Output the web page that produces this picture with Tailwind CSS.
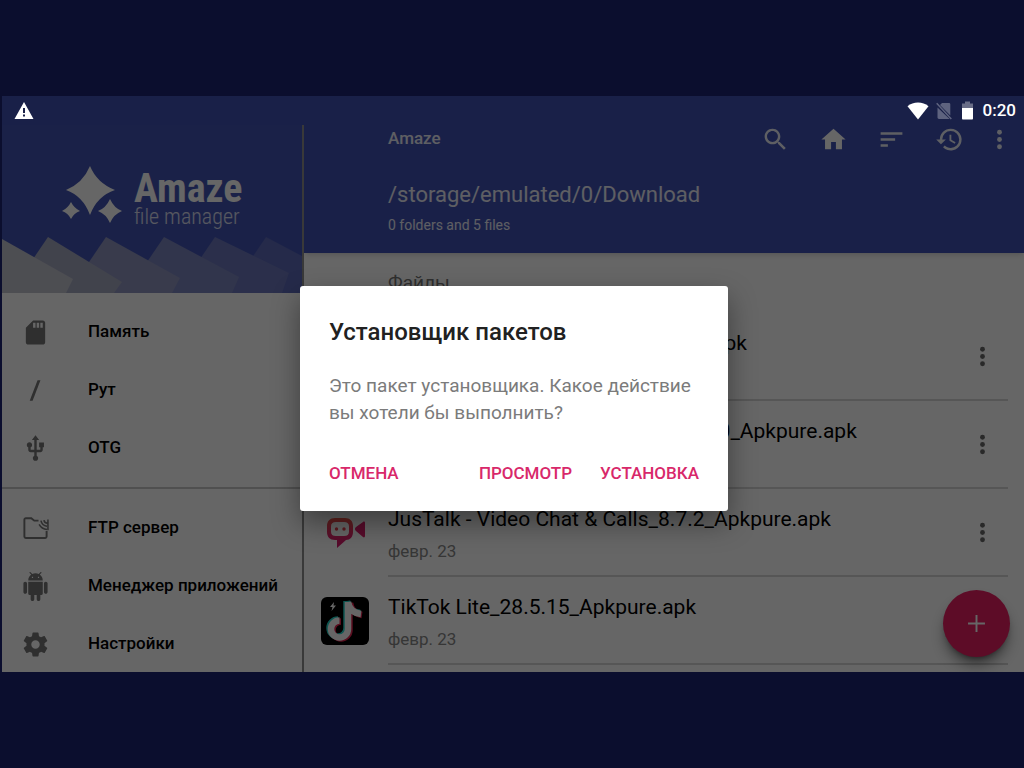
<!DOCTYPE html>
<html lang="ru">

<head>
  <meta charset="UTF-8">
  <meta name="viewport" content="width=device-width, initial-scale=1.0">
  <title>Amaze</title>
  <script src="https://cdn.jsdelivr.net/npm/@tailwindcss/browser@4"></script>
</head>

<body class="bg-[#0b0e2e] min-h-screen flex items-center font-['Roboto',sans-serif]">
  <div class="relative w-full aspect-video overflow-hidden border-l-2 border-[#0b0e2e] bg-[#3f51b5] flex flex-col">

    <!-- Barra de estado -->
    <div class="relative z-20 h-[29px] shrink-0 flex items-center justify-between pl-3 pr-2 text-white">
      <svg class="size-5" viewBox="0 0 20 20" fill="currentColor">
        <path fill-rule="evenodd" d="M10 1 19.500 18H.5zM9 7v5h2V7zm0 6.500v2h2v-2z" />
      </svg>
      <div class="flex items-center gap-[7px]">
        <svg class="w-[22px] h-[18px]" viewBox="0 0 22 18" fill="currentColor">
          <path d="M11 17.500.5 4.200C3.500 1.800 7 .6 11 .6s7.500 1.200 10.500 3.600z" />
        </svg>
        <svg class="w-4 h-[18px] text-white/30" viewBox="0 0 16 18" fill="currentColor">
          <path d="M6 1h7c.8 0 1.300.6 1.300 1.300v11.200L4 3zM1.500 5.500 13.600 17H3c-.8 0-1.500-.6-1.500-1.400z" />
          <path d="M.7 1.200 15.300 17" stroke="currentColor" stroke-width="1.500" />
        </svg>
        <svg class="w-[17px] h-[19px]" viewBox="0 0 17 19" fill="currentColor">
          <path d="M6 .5h5v2h3V7H3V2.500h3z" opacity=".35" />
          <path d="M3 7h11v10.500c0 .5-.4 1-1 1H4c-.6 0-1-.5-1-1z" />
        </svg>
        <span class="text-[17px] font-medium">0:20</span>
      </div>
    </div>

    <div class="flex flex-1 min-h-0">
      <!-- Menu lateral -->
      <nav class="w-[302px] shrink-0 bg-white border-r-2 border-[#8f8f8f] overflow-hidden">
        <div class="relative h-[168px] bg-[#4354b4]">
          <svg class="absolute inset-0 size-full" viewBox="0 0 300 168" preserveAspectRatio="none">
            <path d="M264 112 226 168H300V131z" fill="#5c69b8" />
            <path d="M213 112 175 168H280L287 148z" fill="#6c77bb" />
            <path d="M162 112 124 168H230L237 152z" fill="#7c85bd" />
            <path d="M104 112 66 168H170L178 153z" fill="#8e94bd" />
            <path d="M46 112 8 168H112L120 157z" fill="#a4a7bf" />
            <path d="M0 114V168H64L71 154z" fill="#c0c2ce" />
          </svg>
          <div class="relative flex items-center gap-3 pl-15 pt-10">
            <svg class="size-[60px]" viewBox="0 0 60 60" fill="#fff">
              <path d="M28 1Q35 18 53 25Q35 31 28 50Q21 31 4 25Q21 18 28 1z" />
              <path d="M9 37Q12 43 18 46Q12 48 9 54Q6 48 0 46Q6 43 9 37z" />
              <path d="M48 34Q52 43 60 46Q52 49 48 58Q44 49 36 46Q44 43 48 34z" />
            </svg>
            <div class="pt-1 font-['Roboto_Condensed','Roboto',sans-serif] text-white">
              <div class="text-[40px] leading-10 font-bold">Amaze</div>
              <div class="text-[22px] leading-4 font-light text-white/80">file manager</div>
            </div>
          </div>
        </div>

        <ul class="py-[10px] border-b-2 border-[#c8c8c8]">
          <li>
            <a href="#" class="h-[58px] flex items-center gap-[38px] pl-[19px] text-[17px] font-medium text-black">
              <svg class="size-[29px] text-[#757575]" viewBox="0 0 24 24" fill="currentColor"><path d="M18 2h-8L4.020 8 4 20c0 1.100.9 2 2 2h12c1.100 0 2-.9 2-2V4c0-1.100-.9-2-2-2zm-6 6h-2V4h2v4zm3 0h-2V4h2v4zm3 0h-2V4h2v4z" /></svg>
              Память
            </a>
          </li>
          <li>
            <a href="#" class="h-[58px] flex items-center gap-[38px] pl-[19px] text-[17px] font-medium text-black">
              <svg class="size-[29px] text-[#757575]" viewBox="0 0 24 24" fill="currentColor"><path d="M13.700 3.500h2.400l-6.500 17H7.200z" /></svg>
              Рут
            </a>
          </li>
          <li>
            <a href="#" class="h-[58px] flex items-center gap-[38px] pl-[19px] text-[17px] font-medium text-black">
              <svg class="size-[29px] text-[#757575]" viewBox="0 0 24 24" fill="currentColor"><path d="M15 7v4h1v2h-3V5h2l-3-4-3 4h2v8H8v-2.070c.7-.37 1.200-1.080 1.200-1.930 0-1.210-.99-2.200-2.200-2.200-1.210 0-2.200.99-2.200 2.200 0 .85.5 1.560 1.200 1.930V13c0 1.110.89 2 2 2h3v3.050c-.71.37-1.200 1.100-1.200 1.950 0 1.220.99 2.200 2.200 2.200 1.210 0 2.200-.98 2.200-2.200 0-.85-.49-1.580-1.200-1.950V15h3c1.110 0 2-.89 2-2v-2h1V7h-4z" /></svg>
              OTG
            </a>
          </li>
        </ul>

        <ul class="py-[10px]">
          <li>
            <a href="#" class="h-[58px] flex items-center gap-[38px] pl-[19px] text-[17px] font-medium text-black">
              <svg class="size-[29px] text-[#757575]" viewBox="0 0 24 24" fill="none" stroke="currentColor" stroke-width="1.600">
                <path d="M14.500 5.500H11l-2.500-2H4c-.7 0-1.200.5-1.200 1.200v14c0 .7.500 1.200 1.200 1.200h16c.7 0 1.200-.5 1.200-1.200V14" />
                <path d="M22.300 4.500v9M16.500 5.500a6 6 0 0 0 5 4.700M15 8.500a8.500 8.500 0 0 0 6.500 4.300M19 5a3 3 0 0 0 3 2.600" stroke-width="1.300" />
              </svg>
              FTP сервер
            </a>
          </li>
          <li>
            <a href="#" class="h-[58px] flex items-center gap-[38px] pl-[19px] text-[17px] font-medium text-black">
              <svg class="size-[29px] text-[#757575]" viewBox="0 0 24 24" fill="currentColor"><path d="M6 18c0 .55.45 1 1 1h1v3.500c0 .83.67 1.500 1.500 1.500s1.500-.67 1.500-1.500V19h2v3.500c0 .83.67 1.500 1.500 1.500s1.500-.67 1.500-1.500V19h1c.55 0 1-.45 1-1V8H6v10zM3.500 8C2.670 8 2 8.670 2 9.500v7c0 .83.67 1.500 1.500 1.500S5 17.330 5 16.500v-7C5 8.670 4.330 8 3.500 8zm17 0c-.83 0-1.500.67-1.500 1.500v7c0 .83.67 1.500 1.500 1.500s1.500-.67 1.500-1.500v-7c0-.83-.67-1.500-1.500-1.500zm-4.970-5.840l1.300-1.300c.2-.2.2-.51 0-.71-.2-.2-.51-.2-.71 0l-1.480 1.480C13.850 1.230 12.950 1 12 1c-.96 0-1.860.23-2.660.63L7.850.15c-.2-.2-.51-.2-.71 0-.2.2-.2.51 0 .71l1.310 1.310C6.970 3.260 6 5.010 6 7h12c0-1.990-.97-3.750-2.470-4.840zM10 5H9V4h1v1zm5 0h-1V4h1v1z" /></svg>
              Менеджер приложений
            </a>
          </li>
          <li>
            <a href="#" class="h-[58px] flex items-center gap-[38px] pl-[19px] text-[17px] font-medium text-black">
              <svg class="size-[29px] text-[#757575]" viewBox="0 0 24 24" fill="currentColor"><path d="M19.430 12.980c.04-.32.07-.64.07-.98s-.03-.66-.07-.98l2.110-1.650c.19-.15.24-.42.12-.64l-2-3.460c-.12-.22-.39-.3-.61-.22l-2.490 1c-.52-.4-1.080-.73-1.690-.98l-.38-2.650C14.460 2.180 14.250 2 14 2h-4c-.25 0-.46.18-.49.42l-.38 2.650c-.61.25-1.170.59-1.690.98l-2.490-1c-.23-.09-.49 0-.61.22l-2 3.460c-.13.22-.07.49.12.64l2.110 1.650c-.04.32-.07.65-.07.98s.03.66.07.98l-2.110 1.650c-.19.15-.24.42-.12.64l2 3.460c.12.22.39.3.61.22l2.490-1c.52.4 1.080.73 1.690.98l.38 2.650c.03.24.24.42.49.42h4c.25 0 .46-.18.49-.42l.38-2.650c.61-.25 1.170-.59 1.690-.98l2.490 1c.23.09.49 0 .61-.22l2-3.460c.12-.22.07-.49-.12-.64l-2.110-1.650zM12 15.500c-1.930 0-3.500-1.570-3.500-3.500s1.570-3.500 3.500-3.500 3.500 1.570 3.500 3.500-1.570 3.500-3.500 3.500z" /></svg>
              Настройки
            </a>
          </li>
        </ul>
      </nav>

      <!-- Contenido -->
      <main class="flex-1 min-w-0 bg-white overflow-hidden">
        <header class="relative h-32 bg-[#3f51b5] text-white/90 pl-[84px] shadow-md">
          <div class="flex items-center justify-between h-7 pr-1">
            <h1 class="text-[17px] font-medium">Amaze</h1>
            <div class="flex items-center">
              <button type="button" aria-label="Поиск" class="w-[58px] flex justify-center">
                <svg class="size-[29px]" viewBox="0 0 24 24" fill="currentColor"><path d="M15.500 14h-.79l-.28-.27C15.410 12.590 16 11.110 16 9.500 16 5.910 13.090 3 9.500 3S3 5.910 3 9.500 5.910 16 9.500 16c1.610 0 3.090-.59 4.230-1.570l.27.28v.79l5 4.990L20.490 19l-4.990-5zm-6 0C7.010 14 5 11.990 5 9.500S7.010 5 9.500 5 14 7.010 14 9.500 11.990 14 9.500 14z" /></svg>
              </button>
              <button type="button" aria-label="Домой" class="w-[58px] flex justify-center text-white">
                <svg class="size-[29px]" viewBox="0 0 24 24" fill="currentColor"><path d="M10 20v-6h4v6h5v-8h3L12 3 2 12h3v8z" /></svg>
              </button>
              <button type="button" aria-label="Сортировка" class="w-[58px] flex justify-center">
                <svg class="size-[29px]" viewBox="0 0 24 24" fill="currentColor"><path d="M3 18h6v-2H3v2zM3 6v2h18V6H3zm0 7h12v-2H3v2z" /></svg>
              </button>
              <button type="button" aria-label="История" class="w-[58px] flex justify-center">
                <svg class="size-[29px]" viewBox="0 0 24 24" fill="currentColor"><path d="M13 3a9 9 0 0 0-9 9H1l3.890 3.890.07.14L9 12H6a7 7 0 1 1 7 7c-1.930 0-3.680-.79-4.940-2.060l-1.420 1.420A9 9 0 1 0 13 3zm-1 5v5l4.280 2.540.72-1.210-3.500-2.080V8H12z" /></svg>
              </button>
              <button type="button" aria-label="Ещё" class="w-[42px] flex justify-center">
                <svg class="size-[29px]" viewBox="0 0 24 24" fill="currentColor"><circle cx="12" cy="6" r="2" /><circle cx="12" cy="12" r="2" /><circle cx="12" cy="18" r="2" /></svg>
              </button>
            </div>
          </div>
          <p class="pt-7 text-[22px] leading-7">/storage/emulated/0/Download</p>
          <p class="pt-1.5 text-sm leading-5">0 folders and 5 files</p>
        </header>

        <h2 class="h-[60px] flex items-center pl-[84px] text-[19px] text-[#757575]">Файлы</h2>

        <ul id="fileList" class="pr-4"></ul>
      </main>
    </div>

    <button type="button" aria-label="Добавить"
      class="absolute right-[14px] bottom-[15px] size-[67px] rounded-full bg-[#e91e63] text-white shadow-lg shadow-black/50 flex items-center justify-center">
      <svg class="size-[29px]" viewBox="0 0 24 24" fill="currentColor"><path d="M19 12.800h-6.200V19h-1.600v-6.200H5v-1.600h6.200V5h1.600v6.200H19z" /></svg>
    </button>

    <!-- Dialogo -->
    <div class="absolute inset-0 z-10 pt-[29px] pl-0.5 bg-black/60 flex items-center justify-center">
      <div role="dialog" aria-labelledby="dialogTitle"
        class="w-[428px] bg-white rounded-[3px] px-[29px] pt-[30px] pb-[26px] shadow-[0_12px_28px_rgba(0,0,0,0.4)]">
        <h2 id="dialogTitle" class="text-2xl font-medium text-[#212121]">Установщик пакетов</h2>
        <p class="mt-6 text-[19px] leading-[27px] text-[#7b7b7b]">Это пакет установщика. Какое действие вы хотели бы выполнить?</p>
        <div class="mt-[35px] flex gap-7 text-[17px] leading-6 font-medium text-[#d8286a]">
          <button type="button" class="mr-auto">ОТМЕНА</button>
          <button type="button">ПРОСМОТР</button>
          <button type="button">УСТАНОВКА</button>
        </div>
      </div>
    </div>
  </div>

  <template id="iconApk">
    <svg class="size-12" viewBox="0 0 48 48"><rect width="48" height="48" rx="6" fill="#7cb342" /></svg>
  </template>

  <template id="iconJustalk">
    <svg class="size-12" viewBox="0 0 48 48">
      <defs>
        <linearGradient id="jt" x1="0" y1="0" x2="0" y2="1">
          <stop offset="0" stop-color="#f2574a" />
          <stop offset=".6" stop-color="#e0246b" />
          <stop offset="1" stop-color="#d4186e" />
        </linearGradient>
      </defs>
      <path fill="url(#jt)" fill-rule="evenodd" d="M14 9h10c5 0 8 3 8 8v6c0 5-3 8-7 8l-9 8v-8h-2c-5 0-8-3-8-8v-6c0-5 3-8 8-8zm1 4c-3.500 0-5 1.500-5 4.500v5c0 3 1.500 4.500 5 4.500h8c3.500 0 5-1.500 5-4.500v-5c0-3-1.500-4.500-5-4.500z" />
      <circle cx="15.500" cy="20" r="1.700" fill="#e8404f" />
      <circle cx="23" cy="20" r="1.700" fill="#e8404f" />
      <path fill="#dd1f6b" d="M34 20c0-1 .5-1.500 1-2l7-5c1-.8 2-.3 2 1v13c0 1.300-1 1.800-2 1l-7-6c-.5-.5-1-1-1-2z" />
    </svg>
  </template>

  <template id="iconTiktok">
    <svg class="size-12" viewBox="0 0 48 48">
      <rect width="48" height="48" rx="6" fill="#000" />
      <g fill="none" stroke-width="6.500">
        <path stroke="#25d4c8" d="M25.500 4v27a8.500 8.500 0 1 1-8.500-8.500M26 4c1 6 5 11 13 12" />
        <path stroke="#e0244f" d="M28.500 6v27a8.500 8.500 0 1 1-8.500-8.500M29 6c1 6 5 11 12 12" />
        <path stroke="#fff" d="M27 5v27a8.500 8.500 0 1 1-8.500-8.500M27 5c1 6 5 11 13 12" />
      </g>
      <path fill="#fff" d="m13 5-4 5h2.500L10.500 14l4.500-5.500h-2.500z" />
    </svg>
  </template>

  <script>
    const files = [
      { name: 'Instagram Edit_340.0.0.5_Apkpure.apk', date: 'февр. 23', icon: 'iconApk' },
      { name: 'Messenger Lite - Group_312.0.0.10.0_Apkpure.apk', date: 'февр. 23', icon: 'iconApk' },
      { name: 'JusTalk - Video Chat & Calls_8.7.2_Apkpure.apk', date: 'февр. 23', icon: 'iconJustalk' },
      { name: 'TikTok Lite_28.5.15_Apkpure.apk', date: 'февр. 23', icon: 'iconTiktok', noMenu: true },
    ];

    const fileList = document.getElementById('fileList');

    files.forEach(file => {
      const row = document.createElement('li');
      row.className = "h-[88px] flex items-center pl-[17px] gap-[19px]";
      row.appendChild(document.getElementById(file.icon).content.cloneNode(true));

      const body = document.createElement('div');
      body.className = "flex-1 self-stretch flex items-center justify-between border-b-2 border-[#d6d6d6]";

      const info = document.createElement('div');
      info.className = "pt-1.5";

      const name = document.createElement('p');
      name.className = "text-[21px] leading-8 whitespace-nowrap text-black";
      name.textContent = file.name;

      const date = document.createElement('p');
      date.className = "text-[17px] leading-8 text-[#888]";
      date.textContent = file.date;

      info.appendChild(name);
      info.appendChild(date);
      body.appendChild(info);

      if (!file.noMenu) {
        const menuBtn = document.createElement('button');
        menuBtn.type = 'button';
        menuBtn.setAttribute('aria-label', 'Меню');
        menuBtn.className = "mr-[11px] text-[#666]";
        menuBtn.innerHTML = '<svg class="size-[29px]" viewBox="0 0 24 24" fill="currentColor"><circle cx="12" cy="6" r="2" /><circle cx="12" cy="12" r="2" /><circle cx="12" cy="18" r="2" /></svg>';
        body.appendChild(menuBtn);
      }

      row.appendChild(body);
      fileList.appendChild(row);
    });
  </script>
</body>

</html>
